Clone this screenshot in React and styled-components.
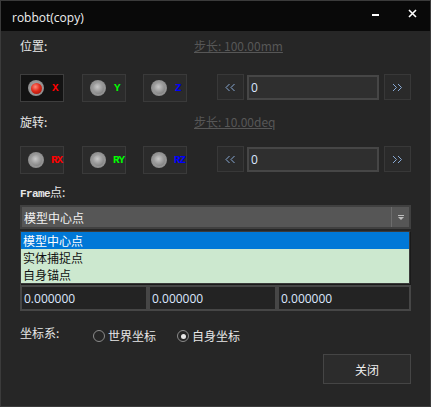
import React from "react";
import styled, { createGlobalStyle } from "styled-components";

const Global = createGlobalStyle`
  html, body { margin: 0; padding: 0; background: #262626; }
  * { box-sizing: border-box; }
`;

const CJK = `"Microsoft YaHei", "Noto Sans CJK SC", "Noto Sans", sans-serif`;

const Window = styled.div`
  width: 431px;
  height: 407px;
  border: 1px solid #3b3b3b;
  background: #262626;
  display: flex;
  flex-direction: column;
  font-family: ${CJK};
  font-size: 12px;
  color: #e8e8e8;
  overflow: hidden;
`;

const TitleBar = styled.div`
  height: 30px;
  flex: none;
  background: #090909;
  display: flex;
  align-items: flex-start;
  padding: 9px 0 0 11px;
`;

const Title = styled.div`
  font-family: "Open Sans", "Noto Sans", sans-serif;
  font-size: 12px;
  line-height: 16px;
  color: #f0f0f0;
  flex: 1;
`;

const TitleButton = styled.div`
  width: 36px;
  height: 20px;
  margin-top: -7px;
  display: flex;
  align-items: center;
  justify-content: center;
`;

const Content = styled.div`
  display: flex;
  flex-direction: column;
  padding: 0 19px;
`;

const LabelRow = styled.div`
  display: flex;
  align-items: center;
  height: 16px;
  margin-top: ${(p) => p.$mt}px;
`;

const Label = styled.div`
  width: 174px;
  line-height: 16px;
  color: #e6e6e6;
`;

const StepLink = styled.div`
  color: #575757;
  text-decoration: underline;
  line-height: 16px;
`;

const AxisRow = styled.div`
  display: flex;
  align-items: flex-start;
  margin-top: ${(p) => p.$mt}px;
`;

const AxisButton = styled.div`
  width: 44px;
  height: 28px;
  flex: none;
  margin-right: ${(p) => p.$mr}px;
  background: ${(p) => (p.$on ? "#131313" : "#2b2b2b")};
  border: 1px solid ${(p) => (p.$on ? "#3e3e3e" : "#3a3a3a")};
  display: flex;
  align-items: center;
  padding-left: 7px;
`;

const Led = styled.div`
  width: 16px;
  height: 16px;
  flex: none;
  border-radius: 50%;
  background: radial-gradient(circle at 50% 50%, #b9b9b9 0%, #8d8d8d 70%, #6a6a6a 100%);
  display: flex;
  align-items: center;
  justify-content: center;
`;

const LedCore = styled.div`
  width: 11px;
  height: 11px;
  border-radius: 50%;
  background: ${(p) =>
    p.$on
      ? "radial-gradient(circle at 40% 35%, #ff8a7a 0%, #e02a1a 45%, #8e0c05 100%)"
      : "radial-gradient(circle at 40% 35%, #c8c8c8 0%, #9a9a9a 50%, #6e6e6e 100%)"};
`;

const AxisText = styled.span`
  font-family: "Liberation Mono", "DejaVu Sans Mono", monospace;
  font-weight: bold;
  font-size: 11px;
  letter-spacing: -1px;
  white-space: nowrap;
  color: ${(p) => p.$c};
  margin-left: ${(p) => (p.$wide ? 7 : 8)}px;
  line-height: 16px;
`;

const Stepper = styled.div`
  margin-left: auto;
  display: flex;
  align-items: flex-start;
`;

const ArrowButton = styled.div`
  width: 27px;
  height: 26px;
  background: #2a2a2a;
  border: 1px solid #383838;
  display: flex;
  align-items: center;
  justify-content: center;
`;

const NumInput = styled.div`
  width: 132px;
  height: 25px;
  margin: 1px 5px 0 3px;
  background: #2f2f2f;
  border: 2px solid #464646;
  display: flex;
  align-items: center;
  padding-left: 2px;
  font-family: "Open Sans", "Noto Sans", sans-serif;
  font-size: 12px;
  color: #dbe8ff;
`;

const FrameLabel = styled.div`
  margin-top: 10px;
  height: 16px;
  line-height: 16px;
  color: #e6e6e6;
`;

const Mono = styled.span`
  font-family: "Liberation Mono", monospace;
  font-size: 11px;
  font-weight: bold;
  letter-spacing: -0.6px;
`;

const ComboWrap = styled.div`
  position: relative;
  margin-top: 5px;
`;

const Combo = styled.div`
  height: 24px;
  background: #565656;
  border: 2px solid #404040;
  display: flex;
  align-items: center;
`;

const ComboText = styled.div`
  flex: 1;
  padding-left: 2px;
  color: #f2f2f2;
`;

const ComboArrow = styled.div`
  width: 18px;
  height: 100%;
  border-left: 1px solid #6c6c6c;
  display: flex;
  align-items: center;
  justify-content: center;
`;

const DropList = styled.div`
  position: absolute;
  left: 0;
  top: 26px;
  width: 390px;
  background: #cce8cf;
  border: 1px solid #3a3a3a;
  box-shadow: 1px 1px 0 #1a1a1a;
  display: flex;
  flex-direction: column;
  z-index: 2;
`;

const DropItem = styled.div`
  height: 17px;
  line-height: 17px;
  padding-left: 2px;
  overflow: hidden;
  background: ${(p) => (p.$sel ? "#0078d7" : "transparent")};
  color: ${(p) => (p.$sel ? "#ffffff" : "#111111")};
`;

const FieldGrid = styled.div`
  margin-top: 30px;
  display: grid;
  grid-template-columns: 128px 129px 1fr;
  grid-auto-rows: 26px;
`;

const Field = styled.div`
  border: 2px solid #464646;
  background: #232323;
  display: flex;
  align-items: center;
  padding-left: 2px;
  font-family: "Open Sans", "Noto Sans", sans-serif;
  font-size: 12px;
  color: #dce8ff;
`;

const CoordRow = styled.div`
  display: flex;
  align-items: flex-start;
  margin-top: 14px;
`;

const CoordLabel = styled.div`
  width: 73px;
  line-height: 16px;
  color: #e6e6e6;
`;

const Radio = styled.div`
  display: flex;
  align-items: center;
  margin-top: 3px;
  margin-right: ${(p) => p.$mr}px;
  line-height: 16px;
  color: #e6e6e6;
`;

const RadioDot = styled.div`
  width: 12px;
  height: 12px;
  border-radius: 50%;
  border: 1px solid #8a8a8a;
  margin-right: 3px;
  display: flex;
  align-items: center;
  justify-content: center;
  &::after {
    content: "";
    width: 5px;
    height: 5px;
    border-radius: 50%;
    background: ${(p) => (p.$on ? "#e8e8e8" : "transparent")};
  }
`;

const Footer = styled.div`
  display: flex;
  justify-content: flex-end;
  margin-top: 10px;
`;

const CloseButton = styled.div`
  width: 88px;
  height: 30px;
  background: #2c2c2c;
  border: 1px solid #454545;
  display: flex;
  align-items: center;
  justify-content: center;
  color: #f0f0f0;
`;

const axes = (prefix) => [
  { t: prefix + "X", c: "#ff0000", mr: 18 },
  { t: prefix + "Y", c: "#00ff00", mr: 17 },
  { t: prefix + "Z", c: "#0000ff", mr: 0 },
];

function AxisGroup({ prefix, active }) {
  return axes(prefix).map((a, i) => (
    <AxisButton key={a.t} $on={active === i} $mr={a.mr}>
      <Led>
        <LedCore $on={active === i} />
      </Led>
      <AxisText $c={a.c} $wide={prefix !== ""}>{a.t}</AxisText>
    </AxisButton>
  ));
}

function Chevrons({ dir }) {
  const d =
    dir === "left"
      ? "M4.5 1 L1 4.5 L4.5 8 M9.5 1 L6 4.5 L9.5 8"
      : "M1 1 L4.5 4.5 L1 8 M6 1 L9.5 4.5 L6 8";
  return (
    <svg width="11" height="9" viewBox="0 0 11 9">
      <path d={d} fill="none" stroke="#88a9d4" strokeWidth="1" />
    </svg>
  );
}

function StepControl() {
  return (
    <Stepper>
      <ArrowButton>
        <Chevrons dir="left" />
      </ArrowButton>
      <NumInput>0</NumInput>
      <ArrowButton>
        <Chevrons dir="right" />
      </ArrowButton>
    </Stepper>
  );
}

const values = ["", "", "", "0.000000", "0.000000", "0.000000"];

export default function App() {
  return (
    <>
      <Global />
      <Window>
        <TitleBar>
          <Title>robbot(copy)</Title>
          <TitleButton>
            <svg width="8" height="8" viewBox="0 0 8 8">
              <rect x="0" y="5" width="7" height="2" fill="#ffffff" />
            </svg>
          </TitleButton>
          <TitleButton>
            <svg width="9" height="9" viewBox="0 0 9 9">
              <path d="M1 1 L8 8 M8 1 L1 8" stroke="#ffffff" strokeWidth="1.6" />
            </svg>
          </TitleButton>
        </TitleBar>
        <Content>
          <LabelRow $mt={7}>
            <Label>位置:</Label>
            <StepLink>步长: 100.00mm</StepLink>
          </LabelRow>
          <AxisRow $mt={20}>
            <AxisGroup prefix="" active={0} />
            <StepControl />
          </AxisRow>
          <LabelRow $mt={12}>
            <Label>旋转:</Label>
            <StepLink>步长: 10.00deq</StepLink>
          </LabelRow>
          <AxisRow $mt={16}>
            <AxisGroup prefix="R" active={-1} />
            <StepControl />
          </AxisRow>
          <FrameLabel>
            <Mono>Frame</Mono>点:
          </FrameLabel>
          <ComboWrap>
            <Combo>
              <ComboText>模型中心点</ComboText>
              <ComboArrow>
                <svg width="6" height="5" viewBox="0 0 6 5">
                  <rect x="0" y="0" width="6" height="1" fill="#bdbdbd" />
                  <path d="M0 2 H6 L3 5 Z" fill="#bdbdbd" />
                </svg>
              </ComboArrow>
            </Combo>
            <DropList>
              <DropItem $sel>模型中心点</DropItem>
              <DropItem>实体捕捉点</DropItem>
              <DropItem>自身锚点</DropItem>
            </DropList>
          </ComboWrap>
          <FieldGrid>
            {values.map((v, i) => (
              <Field key={i}>{v}</Field>
            ))}
          </FieldGrid>
          <CoordRow>
            <CoordLabel>坐标系:</CoordLabel>
            <Radio $mr={21}>
              <RadioDot />
              世界坐标
            </Radio>
            <Radio $mr={0}>
              <RadioDot $on />
              自身坐标
            </Radio>
          </CoordRow>
          <Footer>
            <CloseButton>关闭</CloseButton>
          </Footer>
        </Content>
      </Window>
    </>
  );
}
